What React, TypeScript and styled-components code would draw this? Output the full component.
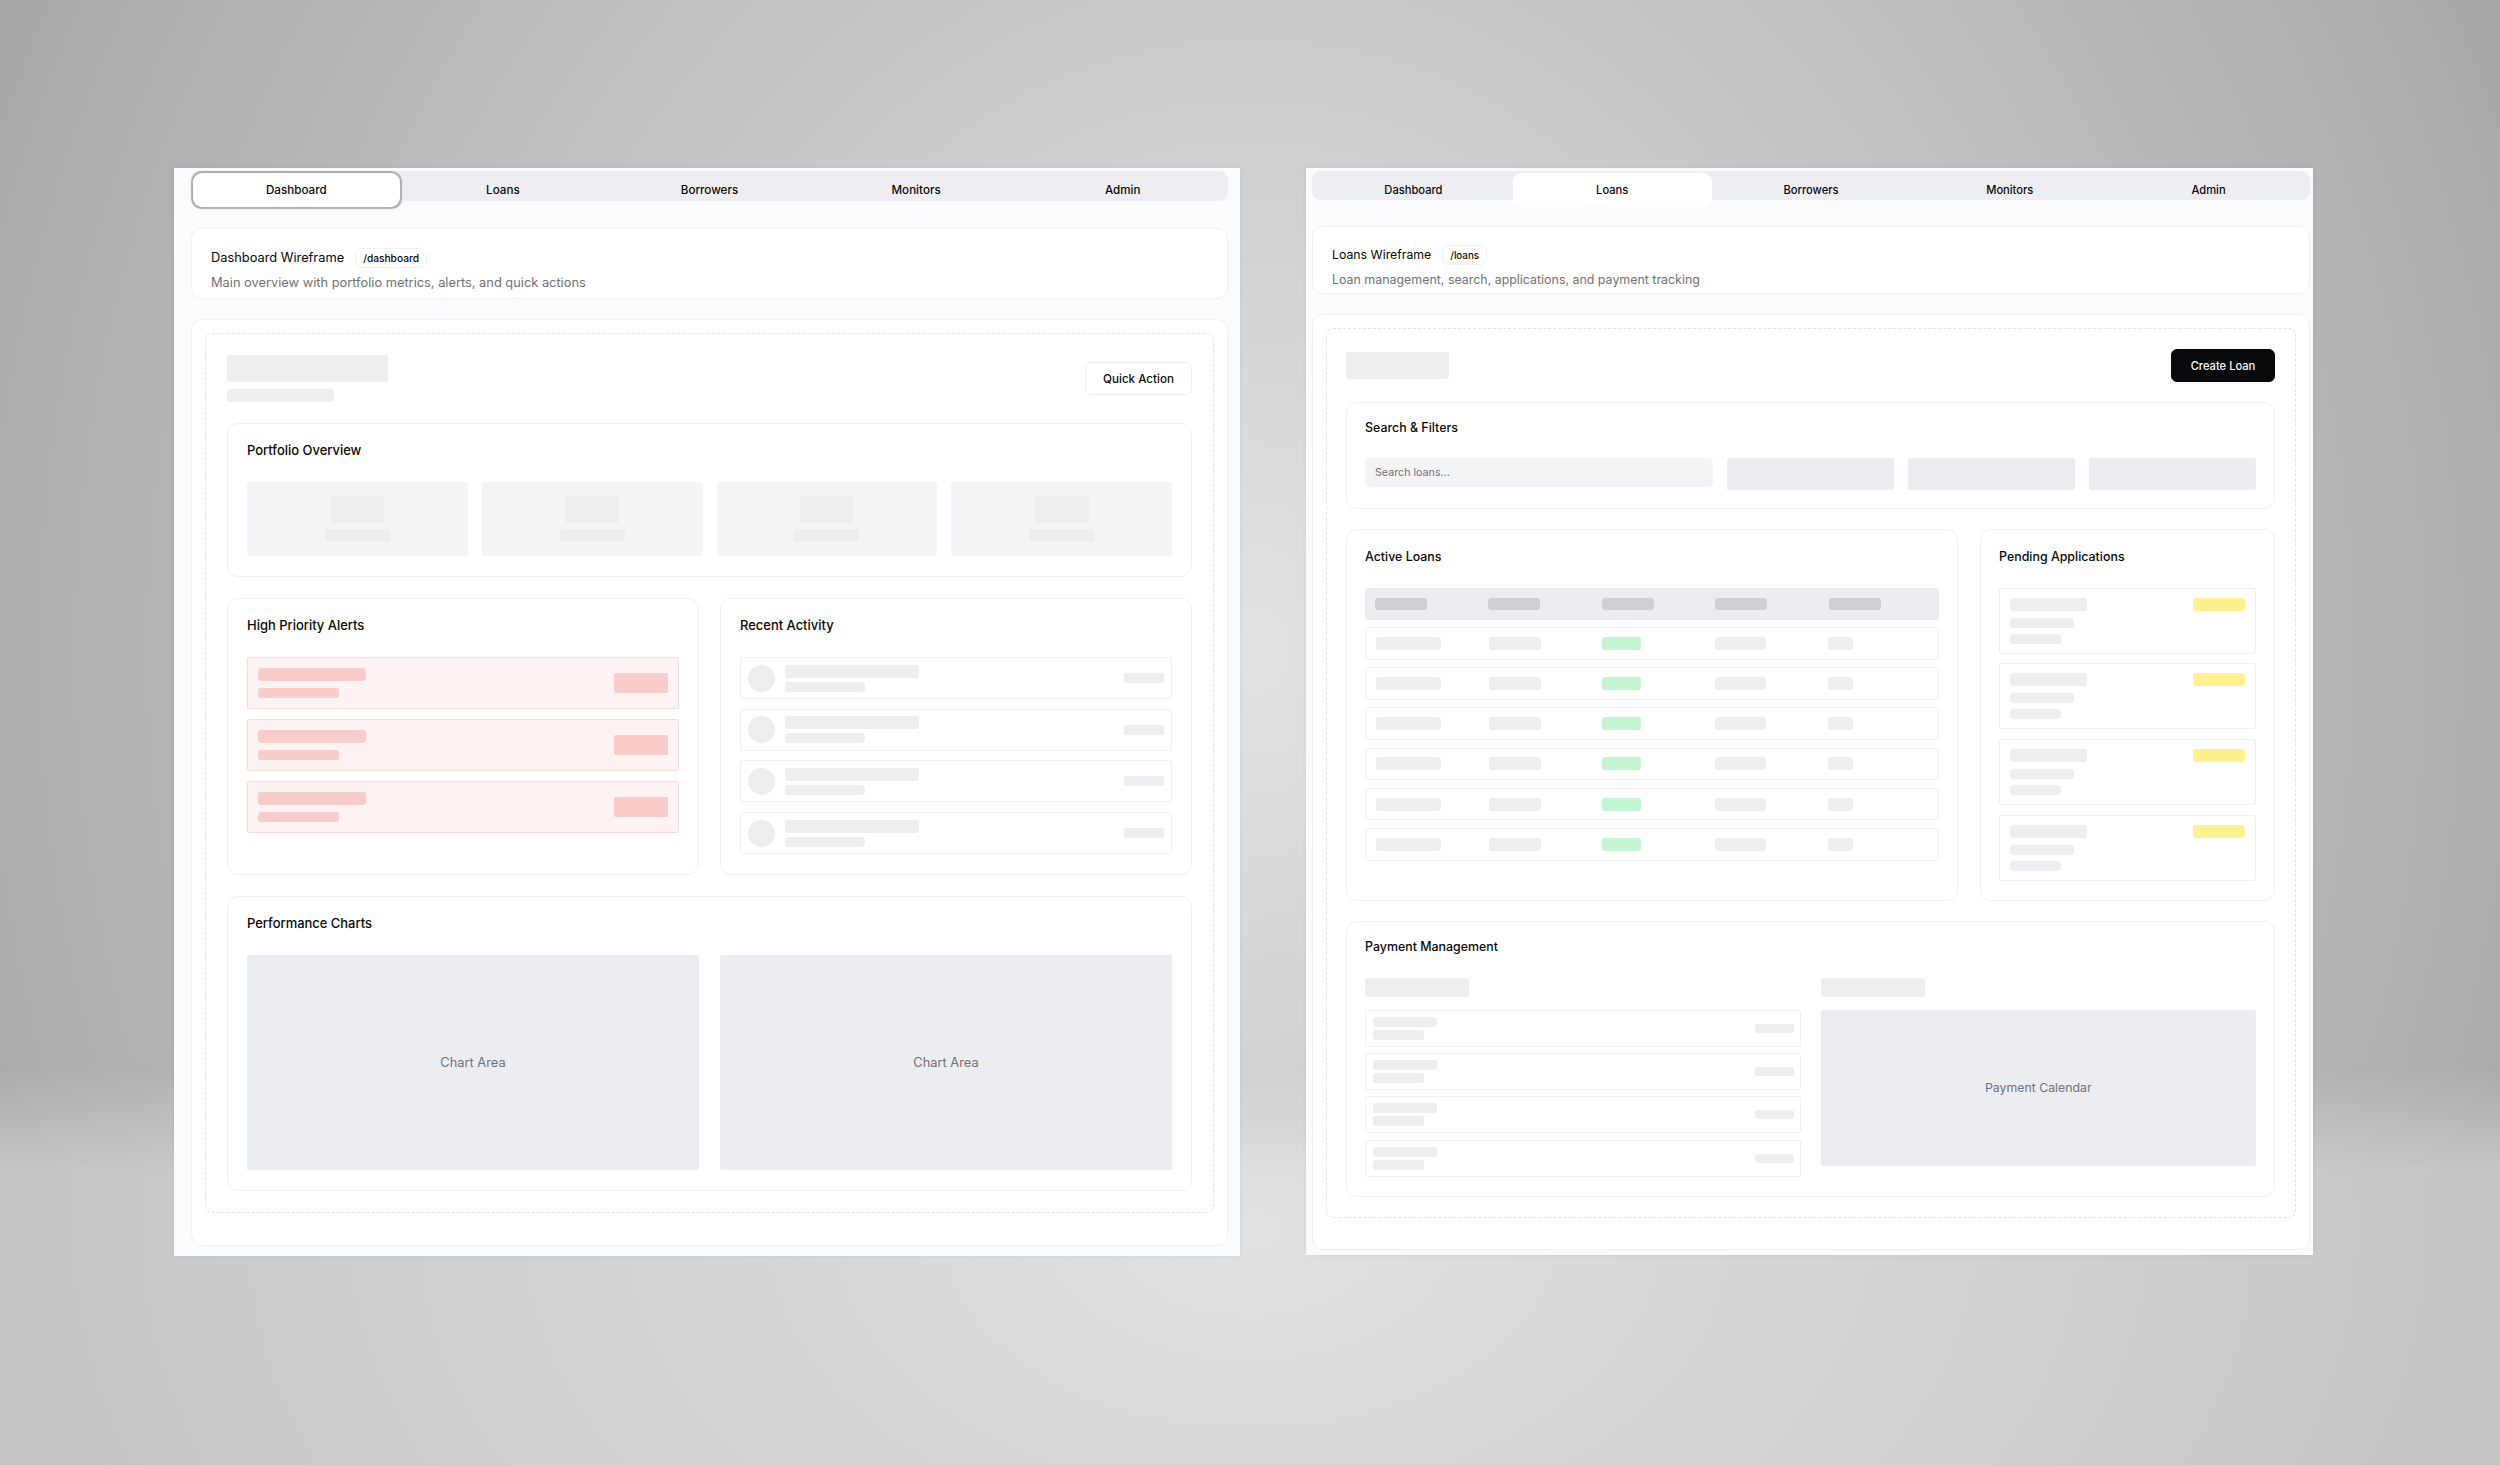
import React from "react";
import styled, { createGlobalStyle } from "styled-components";

const Global = createGlobalStyle`
  html, body { margin: 0; padding: 0; }
  body { width: 2500px; height: 1465px; overflow: hidden; font-family: Inter, "Liberation Sans", sans-serif; }
`;

const Backdrop = styled.div`
  position: relative;
  isolation: isolate;
  width: 2500px;
  height: 1465px;
  padding: 168px 0 0 174px;
  box-sizing: border-box;
  display: flex;
  align-items: flex-start;
  gap: 66px;
  background: radial-gradient(ellipse 1250px 1400px at 1250px 650px, #e2e2e2 0%, #aeaeae 100%, #a6a6a6 112%);

  &::before {
    content: "";
    position: absolute;
    inset: 0;
    z-index: -1;
    background: radial-gradient(ellipse 1250px 800px at 1250px 1230px, #e1e1e1 0%, #c6c6c6 100%);
    mask-image: linear-gradient(180deg, transparent 1065px, #000 1175px);
  }
`;

const Window = styled.section<{ $w: number; $h: number; $pl: number; $pr: number; $fs: number }>`
  width: ${p => p.$w}px;
  height: ${p => p.$h}px;
  box-sizing: border-box;
  padding: 3px ${p => p.$pr}px 0 ${p => p.$pl}px;
  background: #fafbfc;
  font-size: ${p => p.$fs}px;
  color: #09090b;
  box-shadow: 0 0 5px rgba(0, 0, 0, 0.06);
`;

const TabBar = styled.nav<{ $h: number }>`
  height: ${p => p.$h}px;
  padding: 0 2px;
  display: grid;
  grid-template-columns: repeat(5, 1fr);
  background: #eeeef2;
  border-radius: 9px;
`;

const Tab = styled.div<{ $active?: boolean; $focus?: boolean }>`
  height: 33.5px;
  margin-top: 2px;
  display: flex;
  align-items: center;
  justify-content: center;
  font-size: 0.97em;
  font-weight: 500;
  border-radius: 9px;
  background: ${p => (p.$active ? "#ffffff" : "transparent")};
  box-shadow: ${p => (p.$focus ? "0 0 1px 1.5px #adadad" : "none")};
`;

const HeaderCard = styled.header<{ $mt: number; $h: number; $pt: number }>`
  margin-top: ${p => p.$mt}px;
  height: ${p => p.$h}px;
  box-sizing: border-box;
  padding: ${p => p.$pt}px 19px 0;
  background: #fff;
  border: 1px solid #f1f1f4;
  border-radius: 11px;
`;

const TitleRow = styled.div`
  display: flex;
  align-items: center;
  gap: 11px;
  height: 20px;
`;

const PageTitle = styled.h1`
  margin: 0;
  font-size: 1.07em;
  font-weight: 400;
  line-height: 20px;
`;

const RouteBadge = styled.span`
  padding: 0 7px;
  height: 18px;
  display: inline-flex;
  align-items: center;
  font-size: 0.85em;
  font-weight: 500;
  border: 1px solid #f0f0f3;
  border-radius: 7px;
`;

const Description = styled.p<{ $mt: number; $fs: number }>`
  margin: ${p => p.$mt}px 0 0;
  font-size: ${p => p.$fs}em;
  line-height: 16px;
  color: #71717a;
`;

const MainCard = styled.main<{ $mt: number; $h: number }>`
  margin-top: ${p => p.$mt}px;
  height: ${p => p.$h}px;
  box-sizing: border-box;
  padding: 13px 13px 0;
  background: #fff;
  border: 1px solid #f1f1f4;
  border-radius: 11px;
`;

const Dashed = styled.div<{ $pad: number; $pl: number }>`
  padding: ${p => p.$pad}px ${p => p.$pad}px ${p => p.$pad}px ${p => p.$pl}px;
  display: flex;
  flex-direction: column;
  gap: ${p => p.$pad}px;
  border: 1px dashed #e4e4e8;
  border-radius: 7px;
`;

const HeadRow = styled.div`
  display: flex;
  align-items: center;
  justify-content: space-between;
`;

const HeadStack = styled.div`
  display: flex;
  flex-direction: column;
  gap: 7px;
`;

const Bar = styled.div<{ $w: number; $h: number; $c?: string; $r?: number }>`
  flex: none;
  width: ${p => p.$w}px;
  height: ${p => p.$h}px;
  background: ${p => p.$c ?? "#eeeef1"};
  border-radius: ${p => p.$r ?? 3}px;
`;

const Button = styled.button<{ $primary?: boolean; $w: number; $h: number }>`
  width: ${p => p.$w}px;
  height: ${p => p.$h}px;
  padding: 0;
  font: 500 0.97em Inter, "Liberation Sans", sans-serif;
  color: ${p => (p.$primary ? "#fafafa" : "#09090b")};
  background: ${p => (p.$primary ? "#09090b" : "#fff")};
  border: 1px solid ${p => (p.$primary ? "#09090b" : "#eeeef1")};
  border-radius: 6px;
`;

const Card = styled.article<{ $pt: number; $px: number; $pb: number }>`
  box-sizing: border-box;
  padding: ${p => p.$pt}px ${p => p.$px}px ${p => p.$pb}px;
  background: #fff;
  border: 1px solid #f1f1f4;
  border-radius: 11px;
`;

const CardTitle = styled.h2<{ $mb: number }>`
  margin: 0 0 ${p => p.$mb}px;
  font-size: 1.08em;
  font-weight: 500;
  line-height: 16px;
`;

const MetricGrid = styled.div`
  display: grid;
  grid-template-columns: repeat(4, 1fr);
  gap: 14px;
`;

const MetricTile = styled.div`
  height: 74px;
  padding-top: 14px;
  box-sizing: border-box;
  display: flex;
  flex-direction: column;
  align-items: center;
  gap: 6px;
  background: #f5f5f7;
  border-radius: 2px;
`;

const TwoCols = styled.div<{ $gap: number; $cols?: string }>`
  display: grid;
  grid-template-columns: ${p => p.$cols ?? "1fr 1fr"};
  gap: ${p => p.$gap}px;
`;

const Rows = styled.div<{ $gap: number }>`
  display: flex;
  flex-direction: column;
  gap: ${p => p.$gap}px;
`;

const AlertRow = styled.div`
  height: 52px;
  box-sizing: border-box;
  padding: 0 10px;
  display: flex;
  align-items: center;
  justify-content: space-between;
  background: #fdf3f2;
  border: 1px solid #f7dcdc;
  border-radius: 2px;
`;

const Stack = styled.div<{ $gap: number }>`
  display: flex;
  flex-direction: column;
  gap: ${p => p.$gap}px;
`;

const ActivityRow = styled.div`
  height: 42px;
  box-sizing: border-box;
  padding: 0 7px;
  display: flex;
  align-items: center;
  gap: 10px;
  background: #fff;
  border: 1px solid #f1f1f4;
  border-radius: 2px;
`;

const Circle = styled.div`
  width: 27px;
  height: 27px;
  flex: none;
  border-radius: 50%;
  background: #eeeef1;
`;

const PushRight = styled.div`
  margin-left: auto;
`;

const ChartArea = styled.div<{ $h: number }>`
  height: ${p => p.$h}px;
  display: flex;
  align-items: center;
  justify-content: center;
  font-size: 1.07em;
  color: #71717a;
  background: #ecedf1;
  border-radius: 2px;
`;

const SearchGrid = styled.div`
  display: grid;
  grid-template-columns: 348px repeat(3, 1fr);
  gap: 14px;
  align-items: start;
`;

const SearchInput = styled.div`
  height: 29px;
  padding-left: 10px;
  display: flex;
  align-items: center;
  font-size: 0.93em;
  color: #71717a;
  background: #f4f4f6;
  border-radius: 5px;
`;

const FilterBox = styled.div`
  height: 32px;
  background: #ecedf1;
  border-radius: 2px;
`;

const TableRow = styled.div<{ $head?: boolean }>`
  height: ${p => (p.$head ? 32 : 32.7)}px;
  box-sizing: border-box;
  padding: 0 10px;
  display: grid;
  grid-template-columns: repeat(5, 1fr);
  column-gap: 13px;
  align-items: center;
  background: ${p => (p.$head ? "#ecedf1" : "#fff")};
  border: ${p => (p.$head ? "none" : "1px solid #f1f1f4")};
  border-radius: 2px;
`;

const PendingRow = styled.div`
  height: 66px;
  box-sizing: border-box;
  padding: 9px 10px 0 10px;
  background: #fff;
  border: 1px solid #f1f1f4;
  border-radius: 2px;
`;

const PendingTop = styled.div`
  display: flex;
  justify-content: space-between;
  margin-bottom: 7px;
`;

const PaymentRow = styled.div`
  height: 37px;
  box-sizing: border-box;
  padding: 0 6px 0 7px;
  display: flex;
  align-items: center;
  justify-content: space-between;
  background: #fff;
  border: 1px solid #f1f1f4;
  border-radius: 2px;
`;

const PayColumn = styled.div`
  display: flex;
  flex-direction: column;
  gap: 13px;
`;

const red = "#f9cccc";
const green = "#c4f5d3";
const yellow = "#fdf08f";
const tabs = ["Dashboard", "Loans", "Borrowers", "Monitors", "Admin"];

function DashboardWindow() {
  return (
    <Window $w={1066} $h={1088} $pl={17} $pr={12} $fs={12}>
      <TabBar $h={30}>
        {tabs.map((t, i) => <Tab key={t} $active={i === 0} $focus={i === 0}>{t}</Tab>)}
      </TabBar>
      <HeaderCard $mt={27} $h={71} $pt={19}>
        <TitleRow><PageTitle>Dashboard Wireframe</PageTitle><RouteBadge>/dashboard</RouteBadge></TitleRow>
        <Description $mt={7} $fs={1.07}>Main overview with portfolio metrics, alerts, and quick actions</Description>
      </HeaderCard>
      <MainCard $mt={20} $h={927}>
        <Dashed $pad={21} $pl={21}>
          <HeadRow>
            <HeadStack><Bar $w={161} $h={27} /><Bar $w={107} $h={13} /></HeadStack>
            <Button $w={107} $h={33}>Quick Action</Button>
          </HeadRow>
          <Card $pt={18} $px={19} $pb={20}>
            <CardTitle $mb={24}>Portfolio Overview</CardTitle>
            <MetricGrid>
              {[0, 1, 2, 3].map(i => (
                <MetricTile key={i}><Bar $w={54} $h={27} /><Bar $w={65} $h={13} /></MetricTile>
              ))}
            </MetricGrid>
          </Card>
          <TwoCols $gap={21}>
            <Card $pt={18} $px={19} $pb={20}>
              <CardTitle $mb={24}>High Priority Alerts</CardTitle>
              <Rows $gap={10}>
                {[0, 1, 2].map(i => (
                  <AlertRow key={i}>
                    <Stack $gap={7}><Bar $w={108} $h={13} $c={red} /><Bar $w={81} $h={10} $c={red} /></Stack>
                    <Bar $w={54} $h={20} $c={red} $r={2} />
                  </AlertRow>
                ))}
              </Rows>
            </Card>
            <Card $pt={18} $px={19} $pb={20}>
              <CardTitle $mb={24}>Recent Activity</CardTitle>
              <Rows $gap={9.7}>
                {[0, 1, 2, 3].map(i => (
                  <ActivityRow key={i}>
                    <Circle />
                    <Stack $gap={4}><Bar $w={134} $h={13} /><Bar $w={80} $h={10} /></Stack>
                    <PushRight><Bar $w={40} $h={10} /></PushRight>
                  </ActivityRow>
                ))}
              </Rows>
            </Card>
          </TwoCols>
          <Card $pt={18} $px={19} $pb={20}>
            <CardTitle $mb={24}>Performance Charts</CardTitle>
            <TwoCols $gap={21}>
              <ChartArea $h={215}>Chart Area</ChartArea>
              <ChartArea $h={215}>Chart Area</ChartArea>
            </TwoCols>
          </Card>
        </Dashed>
      </MainCard>
    </Window>
  );
}

function LoansWindow() {
  return (
    <Window $w={1007} $h={1087} $pl={6} $pr={3} $fs={11.5}>
      <TabBar $h={29}>
        {tabs.map((t, i) => <Tab key={t} $active={i === 1}>{t}</Tab>)}
      </TabBar>
      <HeaderCard $mt={26} $h={68} $pt={18}>
        <TitleRow><PageTitle>Loans Wireframe</PageTitle><RouteBadge>/loans</RouteBadge></TitleRow>
        <Description $mt={7} $fs={1.08}>Loan management, search, applications, and payment tracking</Description>
      </HeaderCard>
      <MainCard $mt={20} $h={936}>
        <Dashed $pad={20} $pl={19}>
          <HeadRow>
            <Bar $w={103} $h={27} />
            <Button $primary $w={104} $h={33}>Create Loan</Button>
          </HeadRow>
          <Card $pt={17} $px={18} $pb={18}>
            <CardTitle $mb={22}>Search &amp; Filters</CardTitle>
            <SearchGrid>
              <SearchInput>Search loans...</SearchInput>
              <FilterBox /><FilterBox /><FilterBox />
            </SearchGrid>
          </Card>
          <TwoCols $gap={22} $cols="612px 1fr">
            <Card $pt={19} $px={18} $pb={19}>
              <CardTitle $mb={22.5}>Active Loans</CardTitle>
              <Rows $gap={7.5}>
                <TableRow $head>
                  {[0, 1, 2, 3, 4].map(i => <Bar key={i} $w={52} $h={12} $c="#cfd0d6" />)}
                </TableRow>
                {[0, 1, 2, 3, 4, 5].map(i => (
                  <TableRow key={i}>
                    <Bar $w={65} $h={13} />
                    <Bar $w={52} $h={13} />
                    <Bar $w={39} $h={13} $c={green} />
                    <Bar $w={51} $h={13} />
                    <Bar $w={25} $h={13} />
                  </TableRow>
                ))}
              </Rows>
            </Card>
            <Card $pt={19} $px={18} $pb={19}>
              <CardTitle $mb={22.5}>Pending Applications</CardTitle>
              <Rows $gap={9.7}>
                {[0, 1, 2, 3].map(i => (
                  <PendingRow key={i}>
                    <PendingTop><Bar $w={77} $h={13} /><Bar $w={52} $h={13} $c={yellow} /></PendingTop>
                    <Stack $gap={6}><Bar $w={64} $h={10} /><Bar $w={51} $h={10} /></Stack>
                  </PendingRow>
                ))}
              </Rows>
            </Card>
          </TwoCols>
          <Card $pt={17} $px={18} $pb={19}>
            <CardTitle $mb={23}>Payment Management</CardTitle>
            <TwoCols $gap={20}>
              <PayColumn>
                <Bar $w={104} $h={19} />
                <Rows $gap={6.4}>
                  {[0, 1, 2, 3].map(i => (
                    <PaymentRow key={i}>
                      <Stack $gap={3}><Bar $w={64} $h={10} /><Bar $w={51} $h={10} /></Stack>
                      <Bar $w={39} $h={9} />
                    </PaymentRow>
                  ))}
                </Rows>
              </PayColumn>
              <PayColumn>
                <Bar $w={104} $h={19} />
                <ChartArea $h={156}>Payment Calendar</ChartArea>
              </PayColumn>
            </TwoCols>
          </Card>
        </Dashed>
      </MainCard>
    </Window>
  );
}

export default function App() {
  return (
    <>
      <Global />
      <Backdrop>
        <DashboardWindow />
        <LoansWindow />
      </Backdrop>
    </>
  );
}
